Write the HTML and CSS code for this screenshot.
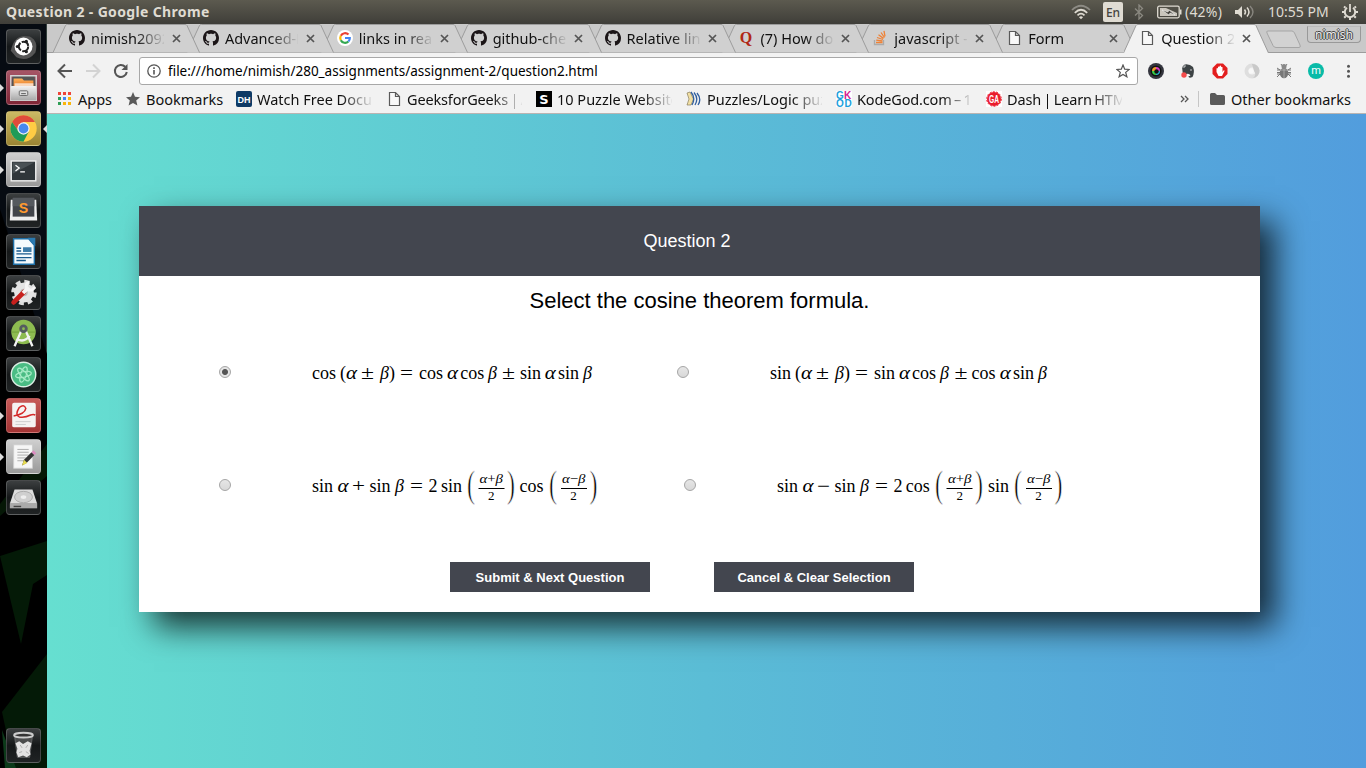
FILE: index.html
```html
<!DOCTYPE html>
<html lang="en">
<head>
<meta charset="utf-8">
<title>Question 2</title>
<link rel="stylesheet" href="styles.css">
</head>
<body>
<svg class="defs" width="0" height="0">
  <defs>
    <symbol id="github" viewBox="0 0 16 16"><path fill="#1b1517" d="M8 0C3.58 0 0 3.58 0 8c0 3.54 2.29 6.53 5.47 7.59.4.07.55-.17.55-.38 0-.19-.01-.82-.01-1.49-2.01.37-2.53-.49-2.69-.94-.09-.23-.48-.94-.82-1.13-.28-.15-.68-.52-.01-.53.63-.01 1.08.58 1.23.82.72 1.21 1.87.87 2.33.66.07-.52.28-.87.51-1.07-1.78-.2-3.64-.89-3.64-3.95 0-.87.31-1.59.82-2.15-.08-.2-.36-1.02.08-2.12 0 0 .67-.21 2.2.82.64-.18 1.32-.27 2-.27s1.36.09 2 .27c1.53-1.04 2.2-.82 2.2-.82.44 1.1.16 1.92.08 2.12.51.56.82 1.27.82 2.15 0 3.07-1.87 3.75-3.65 3.95.29.25.54.73.54 1.48 0 1.07-.01 1.93-.01 2.2 0 .21.15.46.55.38A8.01 8.01 0 0 0 16 8c0-4.42-3.58-8-8-8z"/></symbol>
    <symbol id="page" viewBox="0 0 16 16"><path d="M3.5 1.500h6l4 4v9h-10zM9.500 1.500v4h4" fill="#f8f8f8" stroke="#5a5a5a" stroke-width="1.200"/></symbol>
    <symbol id="close" viewBox="0 0 9 9"><path d="M1 1l7 7M8 1l-7 7" stroke="#555" stroke-width="1.700"/></symbol>
    <symbol id="tabshape" viewBox="0 0 148 29"><path d="M0 28.500L12.500 1.500Q13 .5 14.500 .5H132Q133.500 .5 134 1.500L146.500 28.500" fill="#d0d0d0" stroke="#9c9c9c"/></symbol>
    <linearGradient id="metal" x1="0" y1="0" x2="0" y2="1"><stop offset="0" stop-color="#f2f2f2"/><stop offset="1" stop-color="#a8a8a8"/></linearGradient>
    <linearGradient id="orange" x1="0" y1="0" x2="0" y2="1"><stop offset="0" stop-color="#ffb35a"/><stop offset="1" stop-color="#e06a1c"/></linearGradient>
  </defs>
</svg>

<header class="panel">
  <span class="panel-title">Question 2 - Google Chrome</span>
  <div class="indicators">
    <svg class="wifi" width="20" height="16" viewBox="0 0 20 16" fill="none" stroke-width="1.700"><path d="M1 6Q10-2.500 19 6" stroke="#8d8b84"/><path d="M3.800 8.800Q10 2.700 16.200 8.800M6.500 11.300Q10 8 13.500 11.300" stroke="#dfdbd2"/><path d="M8 13.200Q10 11.400 12 13.200L10 15.200z" fill="#dfdbd2"/></svg>
    <span class="lang">En</span>
    <svg class="bt" width="10" height="16" viewBox="0 0 10 16"><path d="M1 4.500l7.500 7L5 15V1l3.500 3.500-7.500 7" fill="none" stroke="#8b8981" stroke-width="1.300"/></svg>
    <svg class="battery" width="25" height="14" viewBox="0 0 25 14"><rect x=".7" y="1.200" width="21.500" height="11.600" rx="1.500" fill="none" stroke="#dfdbd2" stroke-width="1.300"/><path d="M23 4.500h1.500v5H23z" fill="#dfdbd2"/><path d="M3 3h6l11 5v3H3z" fill="#c9c5bc"/><path d="M5 5l6 2 1-2 6 5-5-2-1 2z" fill="#45433d" stroke="#fff" stroke-width=".5"/></svg>
    <span class="percent">(42%)</span>
    <svg class="sound" width="20" height="16" viewBox="0 0 20 16"><path d="M0 6h3l4-4v12l-4-4H0z" fill="#dfdbd2"/><path d="M9.500 5.500q2 2.500 0 5M12 3.500q4 4.500 0 9" fill="none" stroke="#dfdbd2" stroke-width="1.500"/><path d="M15 2q6 6 0 12" fill="none" stroke="#88867f" stroke-width="1.400"/></svg>
    <span class="clock">10:55 PM</span>
    <svg class="gear" width="18" height="18" viewBox="0 0 18 18"><path d="M6 4.700a5.200 5.200 0 1 0 6 0" fill="none" stroke="#dfdbd2" stroke-width="2"/><path d="M9 1v8" stroke="#dfdbd2" stroke-width="1.800"/><path d="M1 9h2M15 9h2M9 15v2M3.200 14.800l1.500-1.500M14.800 14.800l-1.500-1.500M3 3.500l1.500 1.300M15 3.500l-1.500 1.300" stroke="#dfdbd2" stroke-width="2"/></svg>
  </div>
</header>

<div class="desktop">
<nav class="launcher">
  <svg class="wall" width="47" height="744" viewBox="0 0 47 744"><path d="M0 185L47 330V744H0z" fill="#000"/><path d="M0 532L47 517V551L33 560 21 620z" fill="#041a07"/><path d="M47 630L2 688 14 744H47z" fill="#041a07"/><path d="M0 480L47 420v32L0 492z" fill="#051706"/><path d="M2 706l14 38H5z" fill="#0c3a1a"/></svg>
  <div class="tile dark"><svg viewBox="0 0 35 35"><path d="M4 22Q8 3 24 7q10 5 6 17-8 10-20 5" fill="#555"/><circle cx="17.500" cy="17.500" r="9.500" fill="#fff"/><circle cx="17.500" cy="17.500" r="5" fill="none" stroke="#222" stroke-width="2.200" stroke-dasharray="9 1.500"/><circle cx="11" cy="17.500" r="1.700" fill="#222"/><circle cx="20.500" cy="12" r="1.700" fill="#222"/><circle cx="20.500" cy="23" r="1.700" fill="#222"/></svg></div>
  <div class="tile red running"><svg viewBox="0 0 35 35"><path d="M6 5h23l2 12H4z" fill="#555"/><path d="M7 8h9l2 2h10v8H7z" fill="url(#orange)"/><path d="M8 13h20v5H8z" fill="#fff" opacity=".7"/><path d="M4 5h27v26H4z" fill="none" stroke="#d5d5d5" stroke-width="1.500"/><rect x="4" y="16" width="27" height="15" rx="1" fill="url(#metal)"/><rect x="13" y="21" width="9" height="5" rx="1" fill="#ddd" stroke="#666"/><path d="M15 24h5" stroke="#555"/></svg></div>
  <div class="tile gold running active"><svg viewBox="0 0 35 35"><circle cx="17.500" cy="17.500" r="14" fill="#fc4"/><path d="M5.400 10.500A14 14 0 0 1 29.600 10.500H17.500L12 20z" fill="#df4b3b"/><path d="M5.400 10.500A14 14 0 0 0 17.500 31.500L23 21l-11-1z" fill="#1e9b58"/><circle cx="17.500" cy="17.500" r="6.500" fill="#f4f4f4"/><circle cx="17.500" cy="17.500" r="5.200" fill="#4889ee"/></svg></div>
  <div class="tile silver running"><svg viewBox="0 0 35 35"><rect x="4.500" y="8.500" width="26" height="21" fill="#30363a" stroke="#eee" stroke-width="1.500"/><path d="M6 10h23L6 22z" fill="#4a5155"/><path d="M9 13l4 3-4 3M14 20h5" fill="none" stroke="#fff" stroke-width="1.300"/></svg></div>
  <div class="tile dark"><svg viewBox="0 0 35 35"><path d="M4 6h27l1 22H3z" fill="#eee"/><path d="M6 4h23v20H6z" fill="#42454a"/><path d="M6 4h23v9H6z" fill="#55595e"/><text class="sublime" x="17.500" y="20" text-anchor="middle">S</text></svg></div>
  <div class="tile dark"><svg viewBox="0 0 35 35"><path d="M7 4h16l6 7v20H7z" fill="#f4fafd" stroke="#1f70a8" stroke-width="1.500"/><path d="M22 3h8v9z" fill="#2b7ab1"/><path d="M10 14h5M10 17h5M10 20h16M10 24h16M10 27h10" stroke="#185a8d" stroke-width="1.500"/><rect x="17" y="13" width="9" height="5" fill="#3c7ba8"/></svg></div>
  <div class="tile dark"><svg viewBox="0 0 35 35"><circle cx="18" cy="17.500" r="11.500" fill="none" stroke="#ddd" stroke-width="4" stroke-dasharray="5 4.030"/><circle cx="18" cy="17.500" r="10.500" fill="#e4e4e4"/><circle cx="18" cy="17.500" r="4" fill="#bbb"/><path d="M7 28l11-11" stroke="#c8201d" stroke-width="5" stroke-linecap="round"/><path d="M17 18l6-6" stroke="#f5f5f5" stroke-width="4"/><path d="M24 6.500a4.300 4.300 0 1 0 5 5" fill="none" stroke="#f5f5f5" stroke-width="3"/></svg></div>
  <div class="tile dark"><svg viewBox="0 0 35 35"><circle cx="17.500" cy="16" r="13" fill="#8dbb50"/><path d="M5 16h25" stroke="#709e39"/><path d="M15 15L8 31M20 15l7 16M10 23q8 5 14-3" fill="none" stroke="#f2f2f2" stroke-width="2.500"/><circle cx="17.500" cy="12.500" r="3" fill="#8dbb50" stroke="#555c5f" stroke-width="3"/></svg></div>
  <div class="tile dark"><svg viewBox="0 0 35 35"><circle cx="17.500" cy="17.500" r="13" fill="#4abc84" stroke="#dceee4" stroke-width="1.500"/><g fill="none" stroke="#a6ebc6" stroke-width="1.200"><ellipse cx="17.500" cy="17.500" rx="8.500" ry="3" transform="rotate(-12 17.500 17.500)"/><ellipse cx="17.500" cy="17.500" rx="8.500" ry="3" transform="rotate(48 17.500 17.500)"/><ellipse cx="17.500" cy="17.500" rx="8.500" ry="3" transform="rotate(108 17.500 17.500)"/></g></svg></div>
  <div class="tile crimson running"><svg viewBox="0 0 35 35"><rect x="5.500" y="4" width="25" height="26" rx="2" fill="#f5f3f2"/><path d="M9 24h16M9 27h11" stroke="#ccc"/><path d="M7 18q12-2 13-8-2-5-7-1-5 8 0 10 6 1 12-2 3-1 5 0" fill="none" stroke="#d52a2a" stroke-width="1.600"/></svg></div>
  <div class="tile silver running"><svg viewBox="0 0 35 35"><path d="M7 5h20v25H7z" fill="#f6f6f6" stroke="#ccc"/><path d="M11 10h12M11 13h12M11 16h12M11 19h9M11 22h7" stroke="#aaa"/><path d="M16 27l2-6 8-8 3 3-8 8z" fill="#333"/><path d="M16 27l2-6 3.500 3.500z" fill="#e8dc50"/><path d="M26 13l2-2 3 3-2 2z" fill="#dc8bc0"/></svg></div>
  <div class="tile dark"><svg viewBox="0 0 35 35"><path d="M8 9h19l5 15H3z" fill="#dcdcdc"/><path d="M3 24h29v5H3z" fill="#aaa"/><ellipse cx="17.500" cy="17" rx="9.500" ry="6" fill="#cfcfcf" stroke="#aaa"/><ellipse cx="17.500" cy="17" rx="3" ry="2" fill="#eee"/><path d="M7 27h8" stroke="#444" stroke-width="1.500"/></svg></div>
  <div class="tile dark trash"><svg viewBox="0 0 35 35"><path d="M8 7l3 23h13l3-23" fill="#777" opacity=".5" stroke="#aaa"/><ellipse cx="17.500" cy="6.500" rx="10" ry="2.500" fill="#333" stroke="#ccc" stroke-width="2"/><path d="M9 15l4-2 4 3 5-3 4 2-2 8 1 4-4 3-4-2-5 2-2-5 1-4z" fill="#e2e2e2"/><path d="M14 17l2 3M22 17l-2 3M13 25l3-1M20 24l3 2" fill="none" stroke="#aaa"/></svg></div>
</nav>

<div class="browser">
  <div class="tabs">
    <div class="tab z9"><svg class="shape"><use href="#tabshape"/></svg><svg class="fav"><use href="#github"/></svg><span class="label">nimish2092</span><svg class="x"><use href="#close"/></svg></div>
    <div class="tab z8"><svg class="shape"><use href="#tabshape"/></svg><svg class="fav"><use href="#github"/></svg><span class="label">Advanced-P</span><svg class="x"><use href="#close"/></svg></div>
    <div class="tab z7"><svg class="shape"><use href="#tabshape"/></svg><svg class="fav" viewBox="0 0 16 16"><circle cx="8" cy="8" r="8" fill="#fff"/><g fill="none" stroke-width="2.200"><path d="M11.500 4.600A4.800 4.800 0 0 0 3.800 5.800" stroke="#ea4335"/><path d="M3.800 5.800a4.800 4.800 0 0 0 0 4.400" stroke="#fbbc05"/><path d="M3.800 10.200a4.800 4.800 0 0 0 7.600 1.300" stroke="#34a853"/><path d="M11.400 11.500A4.800 4.800 0 0 0 12.800 8H8" stroke="#4285f4"/></g></svg><span class="label">links in rea</span><svg class="x"><use href="#close"/></svg></div>
    <div class="tab z6"><svg class="shape"><use href="#tabshape"/></svg><svg class="fav"><use href="#github"/></svg><span class="label">github-che</span><svg class="x"><use href="#close"/></svg></div>
    <div class="tab z5"><svg class="shape"><use href="#tabshape"/></svg><svg class="fav"><use href="#github"/></svg><span class="label">Relative lin</span><svg class="x"><use href="#close"/></svg></div>
    <div class="tab z4"><svg class="shape"><use href="#tabshape"/></svg><svg class="fav" viewBox="0 0 16 16"><text class="quora" x="8" y="13" text-anchor="middle">Q</text></svg><span class="label">(7) How do</span><svg class="x"><use href="#close"/></svg></div>
    <div class="tab z3"><svg class="shape"><use href="#tabshape"/></svg><svg class="fav" viewBox="0 0 16 16"><path d="M2.500 10v4.500h9V10" fill="none" stroke="#aaa" stroke-width="1.300"/><path d="M4 12.500h6.500M4.200 10.200l6.300.8M5 7.500l6 2M6.500 4.800l5 3.600M9 2.500l3.500 5M12 .800l1 5.500" stroke="#ef8236" stroke-width="1.300"/></svg><span class="label">javascript -</span><svg class="x"><use href="#close"/></svg></div>
    <div class="tab z2"><svg class="shape"><use href="#tabshape"/></svg><svg class="fav"><use href="#page"/></svg><span class="label">Form</span><svg class="x"><use href="#close"/></svg></div>
    <div class="tab current"><svg class="shape" viewBox="0 0 148 29"><path d="M-.5 29L12 1.500Q12.500 .5 14 .5H130Q131.500 .5 132 1.500L144.500 29" fill="#f2f2f2" stroke="#9c9c9c"/></svg><svg class="fav"><use href="#page"/></svg><span class="label">Question 2</span><svg class="x"><use href="#close"/></svg></div>
    <svg class="newtab" width="36" height="19" viewBox="0 0 36 19"><path d="M1 3Q0 1 2 1H26Q27.500 1 28.500 3L34 15Q35 17.500 33 17.500H10Q8 17.500 7 15.500z" fill="#d2d2d2" stroke="#a5a5a5"/></svg>
    <span class="user">nimish</span>
  </div>

  <div class="toolbar">
    <svg width="16" height="16" viewBox="0 0 16 16"><path d="M15 8H2M8 1.500L1.500 8 8 14.500" fill="none" stroke="#555" stroke-width="2"/></svg>
    <svg width="16" height="16" viewBox="0 0 16 16"><path d="M1 8h13M8 1.500L14.500 8 8 14.500" fill="none" stroke="#d3d3d3" stroke-width="2"/></svg>
    <svg width="16" height="16" viewBox="0 0 16 16"><path d="M13.800 9A6 6 0 1 1 12.200 3.800" fill="none" stroke="#555" stroke-width="2"/><path d="M14.500 1v6h-6z" fill="#555"/></svg>
    <div class="omnibox">
      <svg width="14" height="14" viewBox="0 0 14 14"><circle cx="7" cy="7" r="6.200" fill="none" stroke="#555" stroke-width="1.300"/><path d="M7 6v4.500M7 3.300v1.600" stroke="#555" stroke-width="1.600"/></svg>
      <span class="url">file:///home/nimish/280_assignments/assignment-2/question2.html</span>
      <svg class="fave" width="14" height="14" viewBox="0 0 14 14"><path d="M7 1l1.700 4.200 4.500.3-3.500 2.900 1.200 4.400L7 10.400l-3.900 2.400 1.200-4.400L.8 5.500l4.500-.3z" fill="none" stroke="#555" stroke-width="1.200"/></svg>
    </div>
    <div class="extensions">
      <svg viewBox="0 0 16 16"><circle cx="8" cy="8" r="8" fill="#34353e"/><circle cx="8" cy="8" r="5.500" fill="#111"/><path d="M8 8V4a4 4 0 0 1 4 4z" fill="#d83cc0"/><path d="M8 8h4a4 4 0 0 1-4 4z" fill="#2cb7d9"/><path d="M8 8v4a4 4 0 0 1-4-4z" fill="#38ce46"/><path d="M8 8H4a4 4 0 0 1 4-4z" fill="#ed9a2b"/><circle cx="8.500" cy="8.500" r="2.200" fill="#111"/></svg>
      <svg viewBox="0 0 16 16"><path d="M2 4l3-3 5 1 3 2q2 5-.500 10-4 2-4-1h2q-1-3-4-2-4 1-4-3z" fill="#3d4345"/><path d="M2 4h3V1" fill="none" stroke="#fff" stroke-width=".7"/><circle cx="11" cy="7" r=".7" fill="#fff"/><circle cx="4" cy="12" r="2.700" fill="#f44b4b"/></svg>
      <svg viewBox="0 0 16 16"><path d="M5 .5h6L15.500 5v6L11 15.500H5L.5 11V5z" fill="#e31f1f"/><path d="M4.500 9V5.500q1-1 1.500 0V4q.7-1 1.500 0V3q1-1 1.500 0v1q1-.8 1.500.2V9l1-1.500q1-.6 1 .4L10 13H6.500z" fill="#fff"/></svg>
      <svg viewBox="0 0 16 16"><circle cx="8" cy="8" r="5.500" fill="none" stroke="#dedede" stroke-width="4"/><path d="M8 1a7 7 0 0 1 1 14q4-3 1-7z" fill="#c9c9c9"/><circle cx="7" cy="8" r="2.500" fill="#f8f8f8"/></svg>
      <svg viewBox="0 0 16 16"><path d="M1 5l3 2H1M1 14l3-3H1M15 5l-3 2h3M15 14l-3-3h3M1 9.500h14M5 1l2 3M11 1L9 4" fill="none" stroke="#777"/><ellipse cx="8" cy="10" rx="4.300" ry="5.200" fill="#777"/><circle cx="8" cy="3.500" r="2.500" fill="#888"/><path d="M8 6v9M4 7h8" stroke="#bbb" stroke-width=".7"/></svg>
      <svg viewBox="0 0 16 16"><circle cx="8" cy="8" r="8" fill="#09bba8"/><text class="m" x="8" y="11" text-anchor="middle">m</text></svg>
      <svg viewBox="0 0 16 16" fill="#555"><circle cx="8.500" cy="3.300" r="1.500"/><circle cx="8.500" cy="8.300" r="1.500"/><circle cx="8.500" cy="13.300" r="1.500"/></svg>
    </div>
  </div>

  <div class="bookmarks">
    <svg class="apps" width="13" height="13" viewBox="0 0 13 13"><path d="M0 0h3v3H0zM5 0h3v3H5zM10 0h3v3h-3z" fill="#ef4438"/><path d="M0 5h3v3H0zM0 10h3v3H0z" fill="#2f9e55"/><path d="M5 5h3v3H5z" fill="#4285f4"/><path d="M10 5h3v3h-3zM5 10h3v3H5zM10 10h3v3h-3z" fill="#f9b50b"/></svg>
    <span class="bm-apps">Apps</span>
    <svg class="bstar" width="14" height="14" viewBox="0 0 14 14"><path d="M7 0l2 4.800 5 .4-3.800 3.300 1.200 5L7 10.900l-4.400 2.600 1.200-5L0 5.200l5-.4z" fill="#5a5a5a"/></svg>
    <span class="bm-marks">Bookmarks</span>
    <div class="bm"><svg viewBox="0 0 16 16"><rect width="16" height="16" rx="2" fill="#0e3a66"/><text class="dh" x="8" y="11.500" text-anchor="middle">DH</text></svg><span>Watch Free Docu</span></div>
    <div class="bm"><svg viewBox="0 0 16 16"><use href="#page"/></svg><span class="tight">GeeksforGeeks | A</span></div>
    <div class="bm"><svg viewBox="0 0 16 16"><path d="M0 0h16v16H0z"/><text class="s" x="8" y="12.500" text-anchor="middle">S</text></svg><span>10 Puzzle Website</span></div>
    <div class="bm"><svg viewBox="0 0 16 16"><path d="M1 2l3-1 3.500 7L5 14H1l2-6z" fill="#f1dfa4" stroke="#776b4a" stroke-width=".6"/><path d="M5 1q5 6 1 13M8 1.500q5 6 1 12.500M11 2q5 6 1 12" fill="none" stroke="#315f9e" stroke-width="1.300"/></svg><span>Puzzles/Logic puz</span></div>
    <div class="bm"><svg viewBox="0 0 16 16"><rect width="16" height="16" fill="#fff"/><text class="gk" x="0" y="7.500" fill="#1b9fdc">G</text><text class="gk" x="8" y="7.500" fill="#d42190">K</text><text class="gk" x="0" y="15.500" fill="#1b9fdc">O</text><text class="gk" x="8.500" y="15.500" fill="#1b9fdc">D</text></svg><span class="tight">KodeGod.com – 1</span></div>
    <div class="bm"><svg viewBox="0 0 16 16"><rect width="16" height="16" fill="#fff"/><circle cx="8" cy="8" r="7" fill="#ea1c2c"/><circle cx="8" cy="8" r="7.300" fill="none" stroke="#ea1c2c" stroke-dasharray="2 1.300"/><text class="ga" x="3" y="12" textLength="10" lengthAdjust="spacingAndGlyphs">GA</text></svg><span class="tight">Dash | Learn HTM</span></div>
    <div class="other">
      <svg width="9" height="8" viewBox="0 0 9 8"><path d="M1 1l3 3-3 3M5 1l3 3-3 3" fill="none" stroke="#555" stroke-width="1.300"/></svg>
      <i></i>
      <svg width="15" height="12" viewBox="0 0 15 12"><path d="M0 1.500Q0 0 1.500 0H5l2 2h6.500Q15 2 15 3.500V10.500Q15 12 13.500 12h-12Q0 12 0 10.500z" fill="#5a5a5a"/></svg>
      <span>Other bookmarks</span>
    </div>
  </div>

  <main class="page">
    <form class="card">
      <h1>Question 2</h1>
      <h2>Select the cosine theorem formula.</h2>
      <div class="options">
        <div class="option first"><span class="radio on"></span>
          <svg class="formula" viewBox="0 0 290 38"><g class="r"><text x="0" y="26">cos</text><text x="28" y="26">(</text><text x="49" y="26" textLength="13" lengthAdjust="spacingAndGlyphs">±</text><text x="77" y="26">)</text><text x="88" y="26" textLength="13" lengthAdjust="spacingAndGlyphs">=</text><text x="107" y="26">cos</text><text x="148.300" y="26">cos</text><text x="190" y="26" textLength="13" lengthAdjust="spacingAndGlyphs">±</text><text x="208" y="26">sin</text><text x="246" y="26">sin</text></g><g class="i"><text x="34" y="26" textLength="11" lengthAdjust="spacingAndGlyphs">α</text><text x="68" y="26">β</text><text x="135" y="26" textLength="11" lengthAdjust="spacingAndGlyphs">α</text><text x="176" y="26">β</text><text x="232.700" y="26" textLength="11" lengthAdjust="spacingAndGlyphs">α</text><text x="271" y="26">β</text></g></svg></div>
        <div class="option"><span class="radio"></span>
          <svg class="formula" viewBox="0 0 290 38"><g class="r"><text x="0" y="26">sin</text><text x="25" y="26">(</text><text x="46" y="26" textLength="13" lengthAdjust="spacingAndGlyphs">±</text><text x="74" y="26">)</text><text x="85" y="26" textLength="13" lengthAdjust="spacingAndGlyphs">=</text><text x="104" y="26">sin</text><text x="142" y="26">cos</text><text x="184.500" y="26" textLength="13" lengthAdjust="spacingAndGlyphs">±</text><text x="201.500" y="26">cos</text><text x="243" y="26">sin</text></g><g class="i"><text x="31" y="26" textLength="11" lengthAdjust="spacingAndGlyphs">α</text><text x="65" y="26">β</text><text x="129" y="26" textLength="11" lengthAdjust="spacingAndGlyphs">α</text><text x="170" y="26">β</text><text x="229.700" y="26" textLength="11" lengthAdjust="spacingAndGlyphs">α</text><text x="268" y="26">β</text></g></svg></div>
        <div class="option first"><span class="radio"></span>
          <svg class="formula" viewBox="0 0 290 38"><g class="r"><text x="0" y="26">sin</text><text x="40" y="26" textLength="13" lengthAdjust="spacingAndGlyphs">+</text><text x="57.600" y="26">sin</text><text x="98" y="26" textLength="13" lengthAdjust="spacingAndGlyphs">=</text><text x="116.500" y="26">2</text><text x="129" y="26">sin</text><text x="207.500" y="26">cos</text></g><g class="i"><text x="25.500" y="26" textLength="11" lengthAdjust="spacingAndGlyphs">α</text><text x="83" y="26">β</text></g><g class="paren"><text transform="translate(155 30.500) scale(.63 1)">(</text><text transform="translate(195 30.500) scale(.63 1)">)</text><text transform="translate(237 30.500) scale(.63 1)">(</text><text transform="translate(277.500 30.500) scale(.63 1)">)</text></g><g class="small"><text x="167.500" y="17" textLength="23.500" lengthAdjust="spacingAndGlyphs"><tspan class="i">α</tspan>+<tspan class="i">β</tspan></text><text x="176" y="34">2</text><text x="250" y="17" textLength="23.500" lengthAdjust="spacingAndGlyphs"><tspan class="i">α</tspan>−<tspan class="i">β</tspan></text><text x="258.300" y="34">2</text></g><path d="M166.500 22.500h26M249 22.500h26" stroke="#000"/></svg></div>
        <div class="option shifted"><span class="radio"></span>
          <svg class="formula" viewBox="0 0 290 38"><g class="r"><text x="0" y="26">sin</text><text x="40" y="26" textLength="13" lengthAdjust="spacingAndGlyphs">−</text><text x="57.600" y="26">sin</text><text x="98" y="26" textLength="13" lengthAdjust="spacingAndGlyphs">=</text><text x="116.500" y="26">2</text><text x="128.700" y="26">cos</text><text x="211" y="26">sin</text></g><g class="i"><text x="25.500" y="26" textLength="11" lengthAdjust="spacingAndGlyphs">α</text><text x="83" y="26">β</text></g><g class="paren"><text transform="translate(158 30.500) scale(.63 1)">(</text><text transform="translate(198 30.500) scale(.63 1)">)</text><text transform="translate(237 30.500) scale(.63 1)">(</text><text transform="translate(277.500 30.500) scale(.63 1)">)</text></g><g class="small"><text x="171" y="17" textLength="23.500" lengthAdjust="spacingAndGlyphs"><tspan class="i">α</tspan>+<tspan class="i">β</tspan></text><text x="179.500" y="34">2</text><text x="250" y="17" textLength="23.500" lengthAdjust="spacingAndGlyphs"><tspan class="i">α</tspan>−<tspan class="i">β</tspan></text><text x="258.300" y="34">2</text></g><path d="M169.500 22.500h26M249 22.500h26" stroke="#000"/></svg></div>
      </div>
      <div class="actions"><button type="button">Submit &amp; Next Question</button><button type="button">Cancel &amp; Clear Selection</button></div>
    </form>
  </main>
</div>
</div>
</body>
</html>
```
FILE: styles.css
```css
* { box-sizing: border-box; }
body { margin: 0; width: 1366px; height: 768px; overflow: hidden; font-family: "Noto Sans", "Open Sans", sans-serif; color: #111; }
svg { display: block; flex: none; }
.defs { position: absolute; }

.panel { height: 24px; display: flex; justify-content: space-between; align-items: center; padding: 0 7px 0 6px; background: linear-gradient(#5c5a4f, #3f3e39); color: #dfdbd2; font-size: 14px; line-height: 24px; }
.panel-title { font-weight: bold; font-size: 14px; letter-spacing: .35px; }
.indicators { display: flex; align-items: center; height: 24px; white-space: nowrap; }
.lang { width: 20px; height: 20px; margin-left: 12px; line-height: 21px; text-align: center; background: #dfdbd2; color: #45443e; border-radius: 2px; font-size: 12px; font-weight: 500; }
.bt { margin-left: 11px; }
.battery { margin-left: 13px; }
.percent { width: 38px; margin-left: 3px; letter-spacing: .2px; }
.sound { margin-left: 12px; }
.clock { width: 61px; margin-left: 13px; letter-spacing: 0; }
.gear { margin-left: 12px; }

.desktop { display: flex; height: 744px; }
.launcher { position: relative; width: 47px; display: flex; flex-direction: column; gap: 6px; padding: 5px 0 5px 6px; background: #060b12; border-right: 1px solid #33403c; }
.wall { position: absolute; left: 0; top: 0; }
.tile { position: relative; width: 35px; height: 35px; flex: none; border-radius: 4px; border: 1px solid rgba(255, 255, 255, .18); }
.tile svg { width: 33px; height: 33px; }
.dark { background: linear-gradient(#3c3f40, #151819 50%, #202324); }
.red { background: linear-gradient(#a65566, #7f2636); }
.gold { background: linear-gradient(#cbb964, #9b8433); }
.silver { background: linear-gradient(#cfcfcf, #999); }
.crimson { background: linear-gradient(#c75a58, #a33434); }
.running::before { content: ""; position: absolute; left: -7px; top: 13px; border: 4px solid transparent; border-left: 4px solid #ddd; border-right: 0; }
.active::after { content: ""; position: absolute; right: -7px; top: 13px; border: 4px solid transparent; border-right: 4px solid #ddd; border-left: 0; }
.trash { margin-top: auto; }
.sublime { font: bold 15px "Liberation Sans", sans-serif; fill: #ff9a2e; }

.browser { width: 1319px; display: flex; flex-direction: column; background: #f2f2f2; }
.tabs { height: 29px; display: flex; padding-left: 6px; background: #c9c9c9; border-bottom: 1px solid #9c9c9c; }
.tab { position: relative; width: 133.900px; height: 29px; flex: none; display: flex; align-items: center; padding: 0 0 1px 16px; }
.z9 { z-index: 9; } .z8 { z-index: 8; } .z7 { z-index: 7; } .z6 { z-index: 6; } .z5 { z-index: 5; } .z4 { z-index: 4; } .z3 { z-index: 3; } .z2 { z-index: 2; }
.current { z-index: 10; padding-left: 15px; }
.shape { position: absolute; left: 0; top: 0; width: 148px; height: 29px; }
.fav { position: relative; width: 16px; height: 16px; }
.label { position: relative; width: 73px; margin-left: 6px; overflow: hidden; white-space: nowrap; font-size: 14.500px; line-height: 28px; -webkit-mask-image: linear-gradient(90deg, #000 45px, transparent 75px); mask-image: linear-gradient(90deg, #000 45px, transparent 75px); }
.x { position: relative; width: 9px; height: 9px; margin-left: 8px; }
.quora { font: bold 16px "Liberation Serif", serif; fill: #b02814; }
.newtab { margin: 6px 0 0 8px; }
.user { width: 54px; height: 17px; margin: 2px 0 0 5px; border: 1px solid #999; border-top-color: #bbb; border-radius: 0 0 4px 4px; text-align: center; font-size: 12px; line-height: 15px; color: #eee; text-shadow: 1px 0 #444, -1px 0 #444, 0 1px #444, 0 -1px #444; }

.toolbar { height: 34px; display: flex; align-items: center; gap: 12px; padding: 2px 10px 0 10px; }
.omnibox { width: 999px; height: 28px; margin-left: -2px; display: flex; align-items: center; padding: 0 7px; background: #fff; border: 1px solid #a8a8a8; border-radius: 3px; }
.url { margin-left: 7px; font-size: 13.500px; color: #000; }
.fave { margin-left: auto; }
.extensions { display: flex; gap: 16px; margin-left: -2px; }
.extensions svg { width: 16px; height: 16px; }
.m { font: 11px Roboto, sans-serif; fill: #fff; }

.bookmarks { height: 27px; display: flex; align-items: center; padding: 0 15px 3px 11px; border-bottom: 1px solid #b9b4b2; font-size: 14.500px; line-height: 22px; white-space: nowrap; }
.bm-apps { width: 48px; padding-left: 7px; flex: none; }
.bstar { margin-left: 7px; }
.bm-marks { width: 96px; padding-left: 6px; flex: none; }
.bm { width: 150px; flex: none; display: flex; align-items: center; gap: 5px; }
.bm svg { width: 16px; height: 16px; }
.bm span { width: 115px; overflow: hidden; -webkit-mask-image: linear-gradient(90deg, #000 85px, transparent 117px); mask-image: linear-gradient(90deg, #000 85px, transparent 117px); }
.bm .tight { letter-spacing: -.15px; word-spacing: -1.200px; }
.dh { font: bold 9px "Liberation Sans", sans-serif; fill: #fff; }
.s { font: bold 13px "DejaVu Sans", sans-serif; fill: #fff; }
.gk { font: bold 10px "Liberation Sans", sans-serif; }
.ga { font: bold 11px "Liberation Sans", sans-serif; fill: #fff; }
.other { margin-left: auto; display: flex; align-items: center; }
.other i { width: 1px; height: 16px; margin: 0 11px 0 9px; background: #c6c6c6; }
.other span { width: 120px; margin-left: 6px; }

.page { flex: 1; padding: 92px 0 0 92px; background: linear-gradient(to right, #66dfd0, #5bbdd6 50%, #529ddd); }
.card { width: 1121px; height: 406px; background: #fff; box-shadow: 15px 15px 30px rgba(0, 0, 0, .75); font-family: "Liberation Sans", Arial, sans-serif; }
h1 { margin: 0; height: 70px; padding-right: 25px; background: #43464f; color: #fff; font-size: 18px; font-weight: normal; line-height: 70px; text-align: center; }
h2 { margin: 0; height: 77px; font-size: 22px; font-weight: normal; line-height: 50px; text-align: center; color: #000; }
.options { display: grid; grid-template-columns: 458px 1fr; grid-auto-rows: 38px; row-gap: 75px; padding-left: 80px; }
.option { display: flex; align-items: center; gap: 81px; }
.shifted { padding-left: 7px; }
.radio { width: 12px; height: 12px; border-radius: 50%; border: 1px solid #a5a5a5; background: linear-gradient(#e6e6e6, #d8d8d8); }
.on { background: radial-gradient(circle, #555 0 2.500px, #e4e4e4 3.500px); }
.formula { width: 290px; height: 38px; overflow: visible; font-family: "Liberation Serif", serif; font-size: 18px; fill: #000; }
.i { font-style: italic; }
.paren { font-size: 38px; stroke: #fff; stroke-width: .8px; }
.small { font-size: 13px; }
.actions { display: flex; gap: 64px; padding: 58px 0 0 311px; }
button { width: 200px; height: 30px; padding: 0; border: 0; background: #43464f; color: #fff; font: bold 13px "Liberation Sans", Arial, sans-serif; }
```
